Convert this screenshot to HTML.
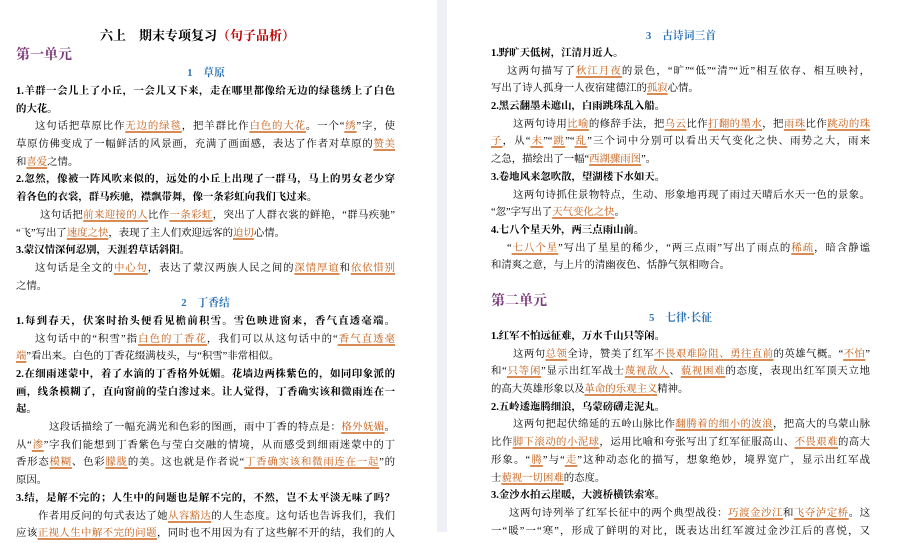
<!DOCTYPE html>
<html><head><meta charset="utf-8">
<style>
*{margin:0;padding:0;box-sizing:border-box}
body{width:902px;height:532px;overflow:hidden;background:#fff;position:relative;font-family:"Liberation Serif","Noto Serif CJK SC",serif;color:#000}
.strip{position:absolute;left:437px;top:0;width:10px;height:532px;background:#eef0f5}
.pg{position:absolute;width:380px}
.l{height:17.7px;line-height:17.7px;font-size:10.4px;white-space:nowrap;text-align:left}
.f{text-align:justify;text-align-last:justify}
.b{font-weight:bold}
.h{color:#c55a11;text-decoration:underline;text-decoration-color:#d98b55;text-decoration-thickness:1.5px;text-underline-offset:2px}
.hd{text-align:center;color:#2e75b6;font-weight:bold;font-size:10.8px}
.unit{color:#7b3a7a;font-weight:bold;font-size:14px}
.title{position:absolute;top:25px;left:100px;font-size:13px;font-weight:bold;white-space:nowrap}
</style></head><body>
<div class="strip"></div>
<div class="title">六上　期末专项复习<span style="color:#c00000">（句子品析）</span></div>
<div class="unit" style="position:absolute;left:16px;top:44px">第一单元</div>
<div class="hd" style="position:absolute;left:16px;width:380px;top:65px">1　草原</div>

<div class="pg" style="left:16px;top:83px;width:379px">
<div class="l f b">1.羊群一会儿上了小丘，一会儿又下来，走在哪里都像给无边的绿毯绣上了白色</div>
<div class="l b">的大花。</div>
<div class="l f" style="padding-left:19px">这句话把草原比作<span class="h">无边的绿毯</span>，把羊群比作<span class="h">白色的大花</span>。一个“<span class="h">绣</span>”字，使</div>
<div class="l f">草原仿佛变成了一幅鲜活的风景画，充满了画面感，表达了作者对草原的<span class="h">赞美</span></div>
<div class="l">和<span class="h">喜爱</span>之情。</div>
<div class="l f b">2.忽然，像被一阵风吹来似的，远处的小丘上出现了一群马，马上的男女老少穿</div>
<div class="l b">着各色的衣裳，群马疾驰，襟飘带舞，像一条彩虹向我们飞过来。</div>
<div class="l f" style="padding-left:24px">这句话把<span class="h">前来迎接的人</span>比作<span class="h">一条彩虹</span>，突出了人群衣裳的鲜艳，“群马疾驰”</div>
<div class="l">“飞”写出了<span class="h">速度之快</span>，表现了主人们欢迎远客的<span class="h">迫切</span>心情。</div>
<div class="l b">3.蒙汉情深何忍别，天涯碧草话斜阳。</div>
<div class="l f" style="padding-left:19px">这句话是全文的<span class="h">中心句</span>，表达了蒙汉两族人民之间的<span class="h">深情厚谊</span>和<span class="h">依依惜别</span></div>
<div class="l">之情。</div>
<div class="l hd">2　丁香结</div>
<div class="l f b">1.每到春天，伏案时抬头便看见檐前积雪。雪色映进窗来，香气直透毫端。</div>
<div class="l f" style="padding-left:19px">这句话中的“积雪”指<span class="h">白色的丁香花</span>，我们可以从这句话中的“<span class="h">香气直透毫</span></div>
<div class="l"><span class="h">端</span>”看出来。白色的丁香花缀满枝头，与“积雪”非常相似。</div>
<div class="l f b">2.在细雨迷蒙中，着了水滴的丁香格外妩媚。花墙边两株紫色的，如同印象派的</div>
<div class="l f b">画，线条模糊了，直向窗前的莹白渗过来。让人觉得，丁香确实该和微雨连在一</div>
<div class="l b">起。</div>
<div class="l f" style="padding-left:33px">这段话描绘了一幅充满光和色彩的图画，雨中丁香的特点是：<span class="h">格外妩媚</span>。</div>
<div class="l f">从“<span class="h">渗</span>”字我们能想到丁香紫色与莹白交融的情境，从而感受到细雨迷蒙中的丁</div>
<div class="l f">香形态<span class="h">模糊</span>、色彩<span class="h">朦胧</span>的美。这也就是作者说“<span class="h">丁香确实该和微雨连在一起</span>”的</div>
<div class="l">原因。</div>
<div class="l f b">3.结，是解不完的；人生中的问题也是解不完的，不然，岂不太平淡无味了吗？</div>
<div class="l f" style="padding-left:22px">作者用反问的句式表达了她<span class="h">从容豁达</span>的人生态度。这句话也告诉我们，我们</div>
<div class="l f">应该<span class="h">正视人生中解不完的问题</span>，同时也不用因为有了这些解不开的结，我们的人</div>
</div>

<div class="pg" style="left:491px;top:28px">
<div class="l hd">3　古诗词三首</div>
</div>
<div class="pg" style="left:491px;top:45px;width:379px">
<div class="l b">1.野旷天低树，江清月近人。</div>
<div class="l f" style="padding-left:16px">这两句描写了<span class="h">秋江月夜</span>的景色，“旷”“低”“清”“近”相互依存、相互映衬，</div>
<div class="l">写出了诗人孤身一人夜宿建德江的<span class="h">孤寂</span>心情。</div>
<div class="l b">2.黑云翻墨未遮山，白雨跳珠乱入船。</div>
<div class="l f" style="padding-left:22px">这两句诗用<span class="h">比喻</span>的修辞手法，把<span class="h">乌云</span>比作<span class="h">打翻的墨水</span>，把<span class="h">雨珠</span>比作<span class="h">跳动的珠</span></div>
<div class="l f"><span class="h">子</span>，从“<span class="h">未</span>”“<span class="h">跳</span>”“<span class="h">乱</span>”三个词中分别可以看出天气变化之快、雨势之大，雨来</div>
<div class="l">之急，描绘出了一幅“<span class="h">西湖骤雨图</span>”。</div>
<div class="l b">3.卷地风来忽吹散，望湖楼下水如天。</div>
<div class="l f" style="padding-left:22px">这两句诗抓住景物特点，生动、形象地再现了雨过天晴后水天一色的景象。</div>
<div class="l">“忽”字写出了<span class="h">天气变化之快</span>。</div>
<div class="l b">4.七八个星天外，两三点雨山前。</div>
<div class="l f" style="padding-left:16px">“<span class="h">七八个星</span>”写出了星星的稀少，“两三点雨”写出了雨点的<span class="h">稀疏</span>，暗含静谧</div>
<div class="l">和清爽之意，与上片的清幽夜色、恬静气氛相吻合。</div>
<div class="l"></div>
<div class="l unit" style="line-height:17.7px">第二单元</div>
<div class="l hd">5　七律·长征</div>
<div class="l b">1.红军不怕远征难，万水千山只等闲。</div>
<div class="l f" style="padding-left:22px">这两句<span class="h">总领</span>全诗，赞美了红军<span class="h">不畏艰难险阻、勇往直前</span>的英雄气概。“<span class="h">不怕</span>”</div>
<div class="l f">和“<span class="h">只等闲</span>”显示出红军战士<span class="h">蔑视敌人</span>、<span class="h">藐视困难</span>的态度，表现出红军顶天立地</div>
<div class="l">的高大英雄形象以及<span class="h">革命的乐观主义</span>精神。</div>
<div class="l b">2.五岭逶迤腾细浪，乌蒙磅礴走泥丸。</div>
<div class="l f" style="padding-left:22px">这两句把起伏绵延的五岭山脉比作<span class="h">翻腾着的细小的波浪</span>，把高大的乌蒙山脉</div>
<div class="l f">比作<span class="h">脚下滚动的小泥球</span>，运用比喻和夸张写出了红军征服高山、<span class="h">不畏艰难</span>的高大</div>
<div class="l f">形象。“<span class="h">腾</span>”与“<span class="h">走</span>”这种动态化的描写，想象绝妙，境界宽广，显示出红军战</div>
<div class="l">士<span class="h">藐视一切困难</span>的态度。</div>
<div class="l b">3.金沙水拍云崖暖，大渡桥横铁索寒。</div>
<div class="l f" style="padding-left:18px">这两句诗列举了红军长征中的两个典型战役：<span class="h">巧渡金沙江</span>和<span class="h">飞夺泸定桥</span>。这</div>
<div class="l f">一“暖”一“寒”，形成了鲜明的对比，既表达出红军渡过金沙江后的喜悦，又</div>
</div>
</body></html>
